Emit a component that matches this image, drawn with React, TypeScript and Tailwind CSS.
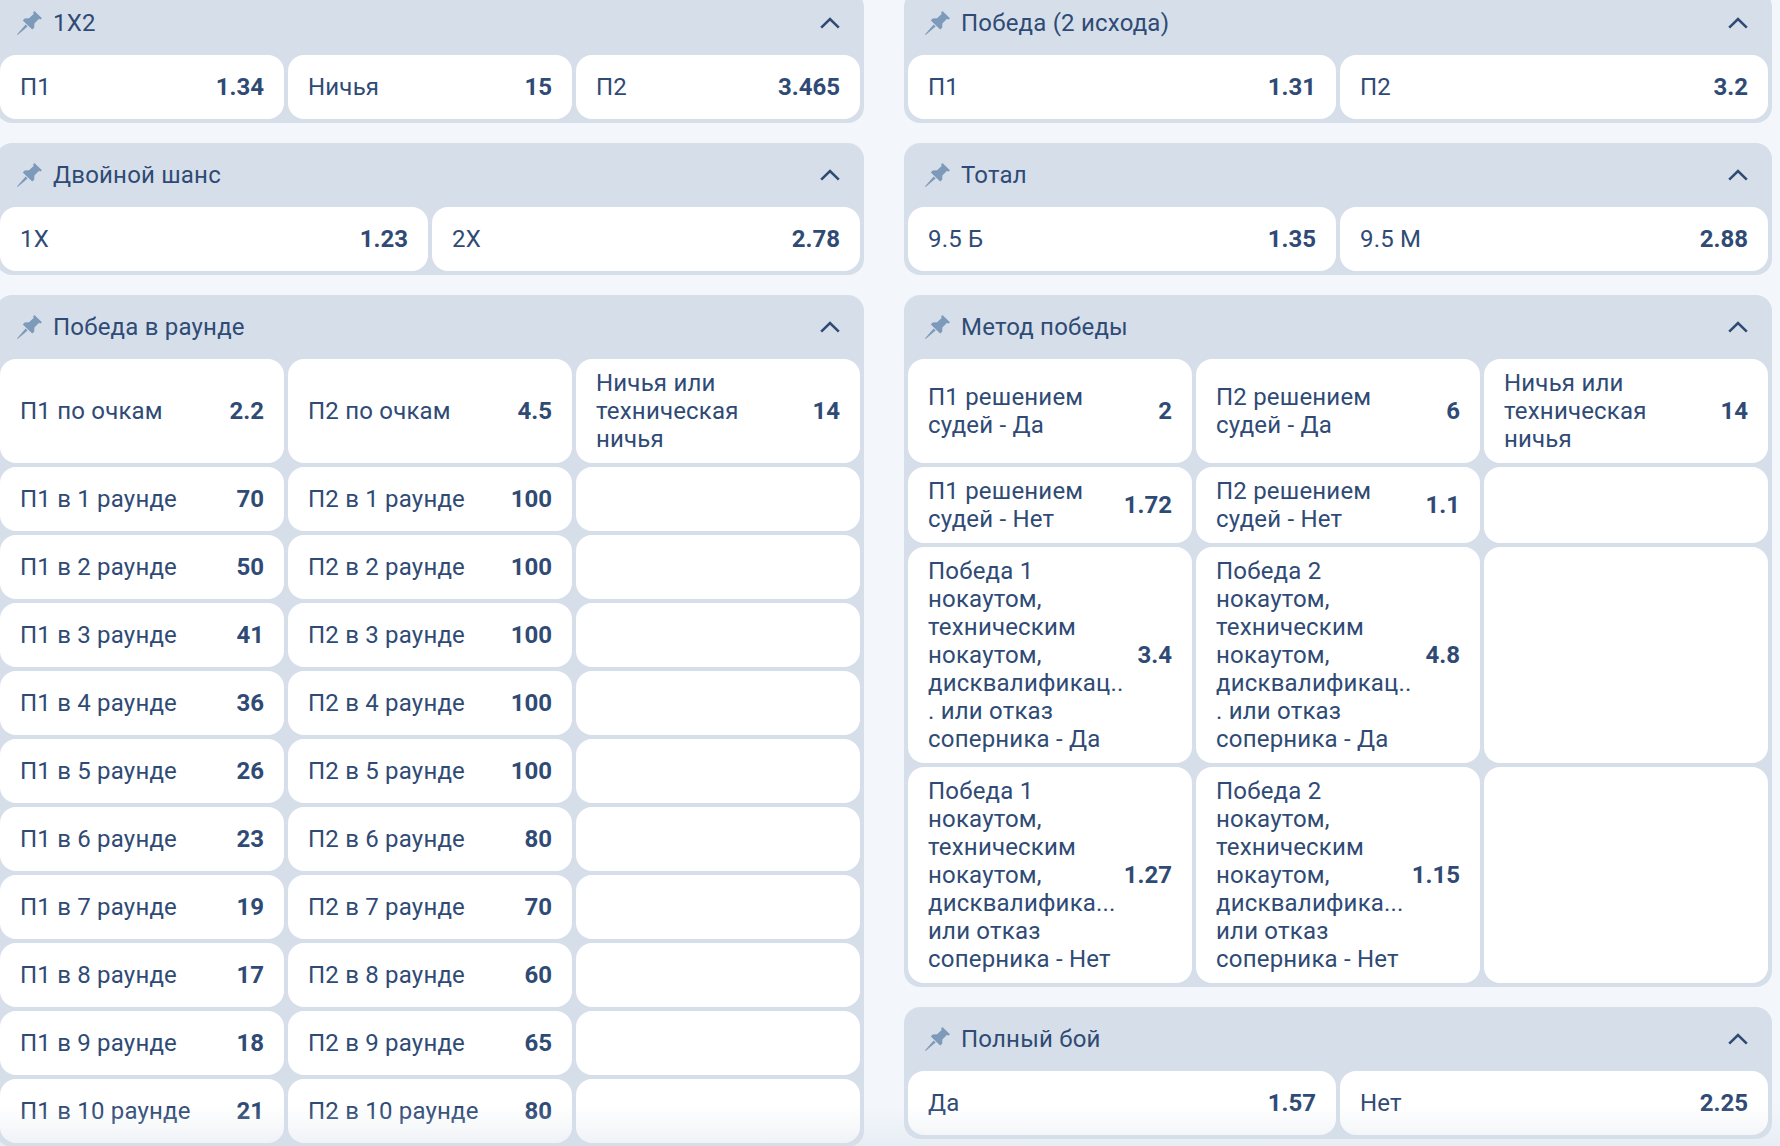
import React from "react";

type Bet = { label?: string; odd?: string };

const Pin = () => (
  <svg viewBox="0 0 25 24" className="h-6 w-[25px] shrink-0 fill-[#7e9abb]">
    <path d="M0 23.6 L8.6 13.6 L10.6 15.6 L0.6 24 Z" />
    <path d="M17.4 0 L25 7.2 L23.6 8.4 L21.8 8 L17.4 12.6 L17.2 16.8 L15.2 18.6 L5.8 9.4 L7.6 7.6 L12 7.2 L16.6 3 L16.2 1.2 Z" />
  </svg>
);

const Chevron = () => (
  <svg viewBox="0 0 20 12" className="h-3 w-5 shrink-0 fill-none stroke-[#2f4b75] stroke-[2.6]">
    <path d="M1.2 10.6 L10 2 L18.8 10.6" />
  </svg>
);

const BetCard = ({ label, odd }: Bet) => (
  <div className="flex min-h-16 items-center justify-between gap-2 rounded-2xl bg-white px-5 py-2.5 text-[24px] leading-7">
    <span className="[overflow-wrap:anywhere] tracking-[0.2px]">{label}</span>
    <span className="shrink-0 font-bold">{odd}</span>
  </div>
);

const Market = ({
  title,
  cols,
  bets
}: {
  title: string;
  cols: 2 | 3;
  bets: Bet[];
}) => (
  <section className="rounded-2xl bg-[#d6dfe9] px-1 pb-1">
    <div className="flex h-16 items-center pr-5 pl-[17px]">
      <Pin />
      <h3 className="ml-[11px] flex-1 text-[24px] font-normal tracking-[0.2px]">{title}</h3>
      <Chevron />
    </div>
    <div className={cols === 2 ? "grid grid-cols-2 gap-1" : "grid grid-cols-3 gap-1"}>
      {bets.map((bet, i) => (
        <BetCard key={i} {...bet} />
      ))}
    </div>
  </section>
);

const rounds: Bet[] = [
  ["70", "100"],
  ["50", "100"],
  ["41", "100"],
  ["36", "100"],
  ["26", "100"],
  ["23", "80"],
  ["19", "70"],
  ["17", "60"],
  ["18", "65"],
  ["21", "80"]
].flatMap(([a, b], i) => [
  { label: `П1 в ${i + 1} раунде`, odd: a },
  { label: `П2 в ${i + 1} раунде`, odd: b },
  {}
]);

export default function App() {
  return (
    <div className="relative h-[1146px] w-[1780px] overflow-hidden bg-[#f3f7fc] font-['Roboto',sans-serif] text-[#2f4b75]">
      <div className="-mt-[9px] -ml-1 grid w-[1776px] grid-cols-2 gap-10">
        <div className="flex flex-col gap-5">
          <Market
            title="1X2"
            cols={3}
            bets={[
              { label: "П1", odd: "1.34" },
              { label: "Ничья", odd: "15" },
              { label: "П2", odd: "3.465" }
            ]}
          />
          <Market
            title="Двойной шанс"
            cols={2}
            bets={[
              { label: "1Х", odd: "1.23" },
              { label: "2Х", odd: "2.78" }
            ]}
          />
          <Market
            title="Победа в раунде"
            cols={3}
            bets={[
              { label: "П1 по очкам", odd: "2.2" },
              { label: "П2 по очкам", odd: "4.5" },
              { label: "Ничья или техническая ничья", odd: "14" },
              ...rounds
            ]}
          />
        </div>
        <div className="flex flex-col gap-5">
          <Market
            title="Победа (2 исхода)"
            cols={2}
            bets={[
              { label: "П1", odd: "1.31" },
              { label: "П2", odd: "3.2" }
            ]}
          />
          <Market
            title="Тотал"
            cols={2}
            bets={[
              { label: "9.5 Б", odd: "1.35" },
              { label: "9.5 М", odd: "2.88" }
            ]}
          />
          <Market
            title="Метод победы"
            cols={3}
            bets={[
              { label: "П1 решением судей - Да", odd: "2" },
              { label: "П2 решением судей - Да", odd: "6" },
              { label: "Ничья или техническая ничья", odd: "14" },
              { label: "П1 решением судей - Нет", odd: "1.72" },
              { label: "П2 решением судей - Нет", odd: "1.1" },
              {},
              { label: "Победа 1 нокаутом, техническим нокаутом, дисквалификац... или отказ соперника - Да", odd: "3.4" },
              { label: "Победа 2 нокаутом, техническим нокаутом, дисквалификац... или отказ соперника - Да", odd: "4.8" },
              {},
              { label: "Победа 1 нокаутом, техническим нокаутом, дисквалифика... или отказ соперника - Нет", odd: "1.27" },
              { label: "Победа 2 нокаутом, техническим нокаутом, дисквалифика... или отказ соперника - Нет", odd: "1.15" },
              {}
            ]}
          />
          <Market
            title="Полный бой"
            cols={2}
            bets={[
              { label: "Да", odd: "1.57" },
              { label: "Нет", odd: "2.25" }
            ]}
          />
        </div>
      </div>
      <div className="pointer-events-none absolute inset-x-0 bottom-0 h-10 bg-gradient-to-b from-transparent to-[#d6dfe9]/40" />
    </div>
  );
}
